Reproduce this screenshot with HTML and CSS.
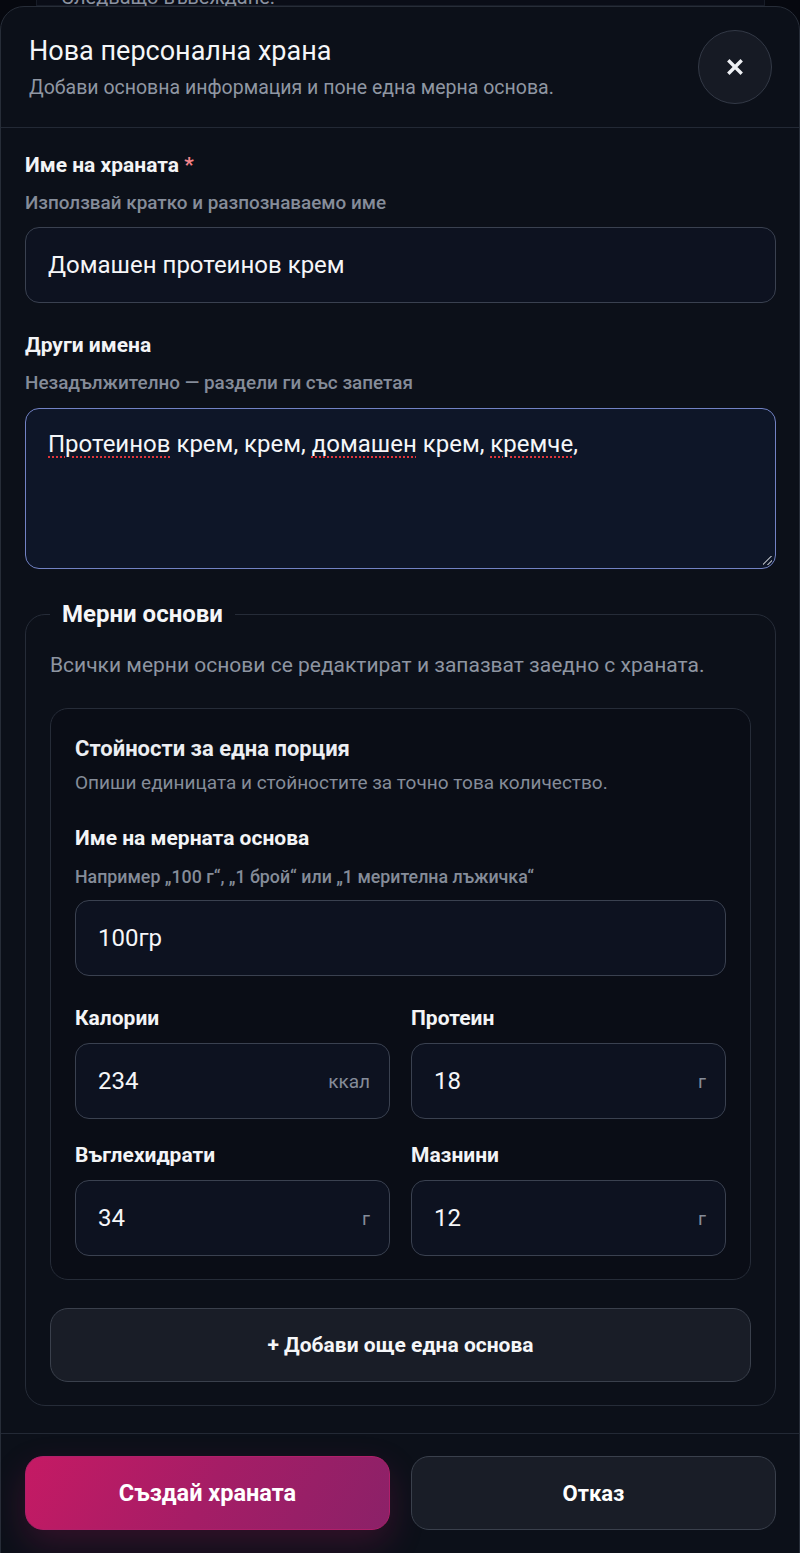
FILE: index.html
```html
<!DOCTYPE html>
<html lang="bg">
<head>
<meta charset="utf-8">
<title>Нова персонална храна</title>
<link rel="stylesheet" href="styles.css">
</head>
<body>
<div class="backdrop"><span>Следващо въвеждане.</span></div>
<div class="modal">
  <header class="modal-head">
    <div class="head-text">
      <h1 class="title">Нова персонална храна</h1>
      <p class="subtitle">Добави основна информация и поне една мерна основа.</p>
    </div>
    <button class="close" type="button" aria-label="Затвори">
      <svg width="18" height="18" viewBox="0 0 18 18"><path d="M3.5 3.5L14.5 14.5M14.5 3.5L3.5 14.5" stroke="#eef0f4" stroke-width="3.4" stroke-linecap="square" fill="none"/></svg>
    </button>
  </header>

  <div class="modal-body">
    <div class="field">
      <div class="label">Име на храната <span class="req">*</span></div>
      <div class="hint">Използвай кратко и разпознаваемо име</div>
      <div class="input">Домашен протеинов крем</div>
    </div>

    <div class="field">
      <div class="label">Други имена</div>
      <div class="hint">Незадължително — раздели ги със запетая</div>
      <div class="textarea"><span class="sp">Протеинов</span> крем, крем, <span class="sp">домашен</span> крем, <span class="sp">кремче</span>,</div>
    </div>

    <fieldset class="bases">
      <legend>Мерни основи</legend>
      <p class="bases-desc">Всички мерни основи се редактират и запазват заедно с храната.</p>

      <div class="card">
        <div class="card-title">Стойности за една порция</div>
        <div class="card-sub">Опиши единицата и стойностите за точно това количество.</div>

        <div class="label">Име на мерната основа</div>
        <div class="hint hint-card">Например „100 г“, „1 брой“ или „1 мерителна лъжичка“</div>
        <div class="input input-card">100гр</div>

        <div class="grid">
          <div class="cell">
            <div class="label">Калории</div>
            <div class="input unit-input"><span>234</span><span class="unit">ккал</span></div>
          </div>
          <div class="cell">
            <div class="label">Протеин</div>
            <div class="input unit-input"><span>18</span><span class="unit">г</span></div>
          </div>
          <div class="cell">
            <div class="label">Въглехидрати</div>
            <div class="input unit-input"><span>34</span><span class="unit">г</span></div>
          </div>
          <div class="cell">
            <div class="label">Мазнини</div>
            <div class="input unit-input"><span>12</span><span class="unit">г</span></div>
          </div>
        </div>
      </div>

      <button class="add" type="button">+ Добави още една основа</button>
    </fieldset>
  </div>

  <footer class="modal-foot">
    <button class="btn primary" type="button">Създай храната</button>
    <button class="btn secondary" type="button">Отказ</button>
  </footer>
</div>
</body>
</html>
```

FILE: styles.css
```css
* { box-sizing: border-box; }

html, body {
  margin: 0;
  padding: 0;
  background: #06080f;
  font-family: Roboto, "Noto Sans", sans-serif;
  color: #f3f4f6;
}

body {
  position: relative;
  padding-top: 6px;
  overflow: hidden;
}

.backdrop {
  position: absolute;
  top: -60px;
  left: 36px;
  right: 35px;
  height: 66px;
  border: 1px solid #171c27;
  background: #0a0d17;
  padding: 0 24px;
  display: flex;
  align-items: flex-end;
  font-size: 20px;
  color: #8b92a0;
  line-height: 22px;
}

.backdrop span { transform: translateY(3px); }

.modal {
  position: relative;
  background: #0c1019;
  border: 1px solid #272d38;
  border-radius: 24px 24px 0 0;
  min-height: 1548px;
}

.modal-head {
  display: flex;
  align-items: center;
  justify-content: space-between;
  padding: 23px 27px 23px 28px;
  border-bottom: 1px solid #232935;
}

.title {
  margin: 0;
  font-size: 27px;
  font-weight: 400;
  line-height: 32px;
  color: #f5f6f8;
}

.subtitle {
  margin: 9px 0 0;
  font-size: 19.5px;
  line-height: 24px;
  color: #9097a3;
}

.close {
  width: 74px;
  height: 74px;
  border-radius: 50%;
  border: 1px solid #333946;
  background: #161a24;
  display: flex;
  align-items: center;
  justify-content: center;
  padding: 0;
}

.modal-body {
  padding: 25px 23px 27px 24px;
  display: flex;
  flex-direction: column;
}

.field { display: flex; flex-direction: column; }
.field + .field { margin-top: 30px; }

.label {
  font-size: 21px;
  font-weight: 700;
  line-height: 24px;
  color: #f3f4f6;
}

.req { color: #f3848a; }

.hint {
  margin-top: 16px;
  font-size: 18.9px;
  font-weight: 500;
  line-height: 20px;
  color: #858c99;
}

.input {
  margin-top: 14px;
  height: 76px;
  border: 1px solid #3a4150;
  border-radius: 14px;
  background: #0d1220;
  padding: 0 22px;
  display: flex;
  align-items: center;
  font-size: 24px;
  color: #f5f6f8;
}

.textarea {
  position: relative;
  margin-top: 15px;
  height: 161px;
  border: 1px solid #7282c4;
  border-radius: 14px;
  background: #0e1628;
  padding: 20px 22px;
  font-size: 24px;
  line-height: 30px;
  color: #f5f6f8;
}

.textarea::after {
  content: "";
  position: absolute;
  right: 3px;
  bottom: 3px;
  width: 9px;
  height: 9px;
  background: linear-gradient(135deg, transparent 42%, #8a8f99 42%, #8a8f99 52%, transparent 52%, transparent 70%, #8a8f99 70%, #8a8f99 80%, transparent 80%);
}

.sp {
  text-decoration: underline dotted #e0353a;
  text-decoration-thickness: 2px;
  text-underline-offset: 4px;
}

.bases {
  margin: 31px 0 0;
  padding: 0 24px 23px;
  border: 1px solid #262c38;
  border-radius: 20px;
  min-width: 0;
}

.bases legend {
  padding: 0 12px;
  font-size: 24px;
  font-weight: 700;
  line-height: 28px;
  color: #f5f6f8;
}

.bases-desc {
  margin: 24px 0 30px;
  font-size: 21px;
  line-height: 26px;
  color: #8e95a1;
}

.card {
  border: 1px solid #262c38;
  border-radius: 18px;
  background: #0a0d16;
  padding: 27px 24px 23px;
  display: flex;
  flex-direction: column;
}

.card-title {
  font-size: 22px;
  font-weight: 700;
  line-height: 26px;
  color: #eceef2;
}

.card-sub {
  margin-top: 9px;
  margin-bottom: 31px;
  font-size: 19px;
  line-height: 24px;
  color: #858c99;
}

.hint-card { margin-top: 17px; font-size: 17.8px; }
.input-card { margin-top: 13px; }

.grid {
  margin-top: 30px;
  display: grid;
  grid-template-columns: 1fr 1fr;
  column-gap: 21px;
  row-gap: 24px;
}

.cell { display: flex; flex-direction: column; }
.cell .input { margin-top: 13px; }

.unit-input {
  justify-content: space-between;
  padding-right: 19px;
}

.unit {
  font-size: 19px;
  color: #858c99;
}

.add {
  margin-top: 28px;
  width: 100%;
  height: 74px;
  border: 1px solid #3a404c;
  border-radius: 18px;
  background: #191d27;
  font-family: inherit;
  font-size: 21px;
  font-weight: 700;
  color: #f5f6f8;
}

.modal-foot {
  border-top: 1px solid #232935;
  padding: 22px 23px 0 24px;
  display: grid;
  grid-template-columns: 1fr 1fr;
  column-gap: 21px;
}

.btn {
  height: 74px;
  border-radius: 18px;
  font-family: inherit;
  font-size: 22px;
  font-weight: 700;
  color: #ffffff;
}

.primary {
  font-size: 23.5px;
  border: 1px solid #b0206a;
  background: linear-gradient(120deg, #c51a64 0%, #a51d66 50%, #8b2168 100%);
  box-shadow: 0 14px 34px rgba(190, 24, 100, 0.22);
}

.secondary {
  border: 1px solid #3a404c;
  background: #191d27;
}
```
